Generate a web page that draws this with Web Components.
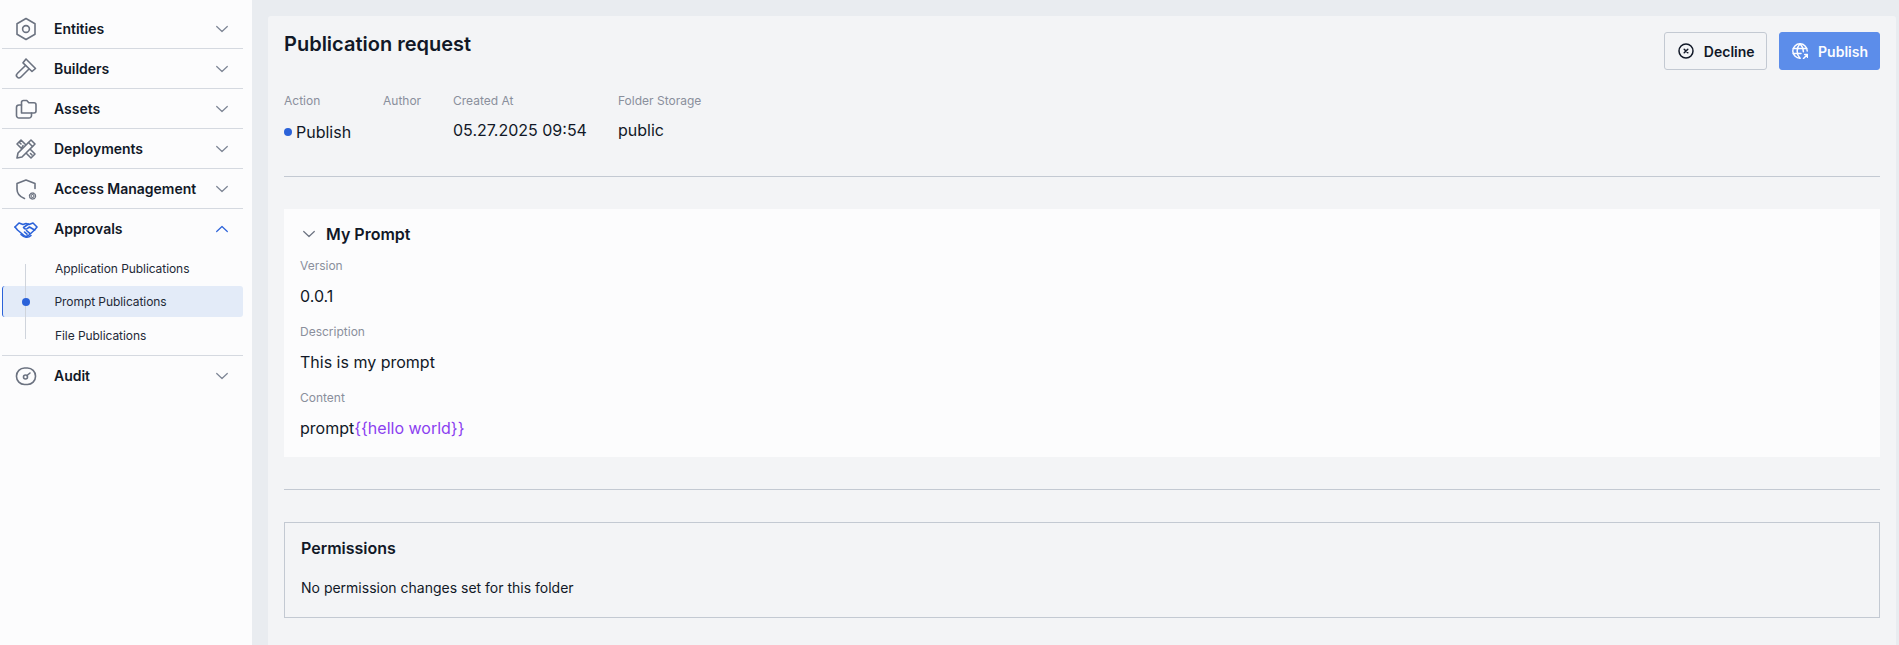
<!DOCTYPE html>
<html>
<head>
<meta charset="utf-8">
<style>
    html, body { margin: 0; height: 100%; overflow: hidden; }
    body {
        font-family: Inter, "Liberation Sans", sans-serif;
        color: #111827;
        background: #e9ecf0;
        display: flex;
    }
</style>
</head>
<body>
<side-bar>
    <nav-group label="Entities" icon="entities"></nav-group>
    <nav-group label="Builders" icon="builders"></nav-group>
    <nav-group label="Assets" icon="assets"></nav-group>
    <nav-group label="Deployments" icon="deployments"></nav-group>
    <nav-group label="Access Management" icon="access"></nav-group>
    <nav-group label="Approvals" icon="approvals" open>
        <nav-item>Application Publications</nav-item>
        <nav-item active>Prompt Publications</nav-item>
        <nav-item>File Publications</nav-item>
    </nav-group>
    <nav-group label="Audit" icon="audit" last></nav-group>
</side-bar>
<request-panel>
    <div slot="meta" style="display:contents">
        <meta-field label="Action" width="99" tight><status-dot>Publish</status-dot></meta-field>
        <meta-field label="Author" width="70" tight></meta-field>
        <meta-field label="Created At" width="165" tight>05.27.2025 09:54</meta-field>
        <meta-field label="Folder Storage" tight>public</meta-field>
    </div>
    <prompt-card title="My Prompt" slot="card">
        <meta-field label="Version" stacked>0.0.1</meta-field>
        <meta-field label="Description" stacked>This is my prompt</meta-field>
        <meta-field label="Content" stacked>prompt<span style="color:#8b3ff0">{{hello world}}</span></meta-field>
    </prompt-card>
    <permissions-box slot="permissions">No permission changes set for this folder</permissions-box>
</request-panel>

<script>
const ICONS = {
    entities: '<path d="M12 1.500l9 5.200v10.600l-9 5.200-9-5.200V6.700z"/><circle cx="12" cy="12" r="3.400"/>',
    builders: '<path d="M12 2l9.500 9.500-3.500 3L9 5.800z"/><path d="M11.500 8.500L3.300 16.500a2.300 2.300 0 0 0 3.400 3.700l8-8"/>',
    assets: '<path d="M7.500 16V5.500a2 2 0 0 1 2-2h3.300l2 2.200H20a2 2 0 0 1 2 2V14a2 2 0 0 1-2 2z"/><path d="M7.500 8H5a2.500 2.500 0 0 0-2.500 2.500V18.500A2.500 2.500 0 0 0 5 21h10a2.500 2.500 0 0 0 2.500-2.500V16"/>',
    deployments: '<path d="M3 21l1-5L17 3l4 4L8 20z"/><path d="M14.500 5.500l4 4"/><path d="M9 8.500L7.500 11.500 3 7l4-4 4.500 4.500"/><path d="M12.500 16.500L17 21l4-4-4.500-4.500"/><path d="M5.500 5.500l1.500 1.500M16.500 16.500l1.500 1.500"/>',
    access: '<path d="M21 11.500V6.500L12 3 3 6.500V12c0 4.500 3.500 8 7.500 9.500"/><circle cx="18.500" cy="19" r="3" stroke-width="1.400" stroke-dasharray="1.200 1.150"/><circle cx="18.500" cy="19" r="2" fill="currentColor" stroke="none"/><circle cx="18.500" cy="19" r=".9" fill="#fcfcfd" stroke="none"/>',
    approvals: '<path d="M1 10l4-4 4 1.500 3-1 3 1 4-1.500 4 4-2.500 3"/><path d="M14.500 7L9.500 10.500c1 2 3 2 4.500.5l1.500-1L20.500 13"/><path d="M1 10l2.500 3L10 18.500c1.500 1.300 3 1 4.500 0l6-5.500"/><path d="M7 17.500c3 3 7 4 10 1"/><path d="M12.500 13.500l3 2.700M10.500 15l2.500 2.200"/>',
    audit: '<rect x="2.500" y="4" width="19" height="16.500" rx="8"/><circle cx="11.500" cy="13" r="2"/><path d="M13 11.500L16 9"/>'
};
const CHEVRON = '<svg width="14" height="14" viewBox="0 0 14 14" fill="none" stroke="currentColor" stroke-width="1.200" stroke-linecap="round" stroke-linejoin="round"><path d="M1.700 4.500L7 9.500L12.300 4.500"/></svg>';

class SideBar extends HTMLElement {
    connectedCallback() {
        this.attachShadow({ mode: 'open' }).innerHTML = `
            <style>
                :host {
                    display: block;
                    box-sizing: border-box;
                    width: 252px;
                    flex: none;
                    height: 100%;
                    padding: 9px 9px 0 2px;
                    background: #fcfcfd;
                }
            </style>
            <slot></slot>
        `;
    }
}

class NavGroup extends HTMLElement {
    connectedCallback() {
        const open = this.hasAttribute('open');
        const icon = ICONS[this.getAttribute('icon')];
        this.attachShadow({ mode: 'open' }).innerHTML = `
            <style>
                :host {
                    display: block;
                    border-bottom: 1px solid #d5d9e0;
                    height: 39px;
                }
                :host([open]) { height: 146px; }
                :host([last]) { border-bottom: none; }
                .head {
                    display: flex;
                    align-items: center;
                    height: 39px;
                    padding: 0 14px 0 12px;
                    font-size: 14px;
                    font-weight: 600;
                    color: #111827;
                }
                .icon { width: 24px; height: 24px; flex: none; color: ${open ? '#2b62d9' : '#6b7280'}; }
                .label { margin-left: 16px; flex: 1; letter-spacing: -0.02px; }
                .chev { display: flex; color: ${open ? '#2b62d9' : '#7c8494'}; transform: ${open ? 'scaleY(-1)' : 'none'}; }
                .items { position: relative; margin-top: 5px; }
                .items::before {
                    content: '';
                    position: absolute;
                    z-index: 1;
                    left: 23px;
                    top: 11px;
                    bottom: 12px;
                    width: 1px;
                    background: #cfd4dc;
                }
            </style>
            <div class="head">
                <svg class="icon" viewBox="0 0 24 24" fill="none" stroke="currentColor" stroke-width="1.600" stroke-linecap="round" stroke-linejoin="round">${icon}</svg>
                <span class="label">${this.getAttribute('label')}</span>
                <span class="chev">${CHEVRON}</span>
            </div>
            ${open ? '<div class="items"><slot></slot></div>' : ''}
        `;
    }
}

class NavItem extends HTMLElement {
    connectedCallback() {
        this.attachShadow({ mode: 'open' }).innerHTML = `
            <style>
                :host {
                    display: flex;
                    align-items: center;
                    position: relative;
                    height: 31px;
                    margin-bottom: 2.330px;
                    padding-left: 53px;
                    font-size: 12px;
                    font-weight: 400;
                    letter-spacing: -0.07px;
                    color: #1f2937;
                    border-radius: 3px;
                    box-sizing: border-box;
                }
                :host([active]) {
                    background: #e3ebf8;
                    border-left: 1.500px solid #2b62d9;
                    padding-left: 51.500px;
                }
                .dot {
                    display: none;
                    position: absolute;
                    z-index: 2;
                    left: 18.500px;
                    top: 11.500px;
                    width: 8px;
                    height: 8px;
                    border-radius: 50%;
                    background: #2b62d9;
                }
                :host([active]) .dot { display: block; }
            </style>
            <span class="dot"></span><slot></slot>
        `;
    }
}

class RequestPanel extends HTMLElement {
    connectedCallback() {
        this.attachShadow({ mode: 'open' }).innerHTML = `
            <style>
                :host {
                    display: block;
                    box-sizing: border-box;
                    flex: 1;
                    margin: 16px 3px 0 16px;
                    padding: 16px;
                    border-radius: 3px 3px 0 0;
                    background: #f3f4f6;
                }
                header { display: flex; justify-content: space-between; align-items: flex-start; }
                h1 { margin: 0; font-size: 20px; line-height: 24px; font-weight: 600; }
                .actions { display: flex; gap: 12px; }
                .meta { display: flex; margin-top: 23px; height: 49px; }
                hr { border: 0; border-top: 1px solid #c3c9d2; margin: 0; }
                .top-rule { margin-top: 34px; }
                .card-wrap { margin-top: 32px; }
                .bottom-rule { margin-top: 32px; }
                .perm-wrap { margin-top: 32px; }
            </style>
            <header>
                <h1>Publication request</h1>
                <div class="actions">
                    <action-button icon="decline">Decline</action-button>
                    <action-button icon="publish" primary>Publish</action-button>
                </div>
            </header>
            <div class="meta"><slot name="meta"></slot></div>
            <hr class="top-rule">
            <div class="card-wrap"><slot name="card"></slot></div>
            <hr class="bottom-rule">
            <div class="perm-wrap"><slot name="permissions"></slot></div>
        `;
    }
}

class ActionButton extends HTMLElement {
    connectedCallback() {
        const icon = this.getAttribute('icon') === 'decline'
            ? '<circle cx="10" cy="10" r="7"/><path d="M8.200 8.200l3.600 3.600M11.800 8.200l-3.600 3.600"/>'
            : '<path d="M17.200 10a7.200 7.200 0 1 0-7.200 7.200"/><path d="M3.300 7.500h13.400M3.300 12.500h7.700"/><path d="M10 2.800c-3.800 4-3.800 10.400 0 14.400M10 2.800c2.400 2.500 3.400 5.200 3.400 8"/><path d="M13.500 17.500l4-4M14.700 13.500h2.800v2.800"/>';
        this.attachShadow({ mode: 'open' }).innerHTML = `
            <style>
                :host {
                    display: inline-flex;
                    align-items: center;
                    gap: 10px;
                    box-sizing: border-box;
                    height: 38px;
                    padding: 0 11px 0 12.500px;
                    font-size: 14px;
                    font-weight: 600;
                    border-radius: 3px;
                    border: 1px solid #c3c9d2;
                    color: #111827;
                }
                :host([primary]) {
                    border-color: #5c8dea;
                    background: #5c8dea;
                    color: #fbfcff;
                }
                svg { width: 16px; height: 16px; flex: none; }
            </style>
            <svg viewBox="2 2 16 16" fill="none" stroke="currentColor" stroke-width="1.500" stroke-linecap="round" stroke-linejoin="round">${icon}</svg>
            <slot></slot>
        `;
    }
}

class MetaField extends HTMLElement {
    connectedCallback() {
        const width = this.getAttribute('width');
        this.attachShadow({ mode: 'open' }).innerHTML = `
            <style>
                :host {
                    display: block;
                    ${width ? `width: ${width}px; flex: none;` : ''}
                    font-size: 16px;
                    line-height: 24px;
                    color: #111827;
                }
                :host([stacked]) { margin-bottom: 16px; }
                .label {
                    font-size: 12px;
                    line-height: 16px;
                    color: #8a8f9c;
                    margin-bottom: 10px;
                }
                :host([tight]) .label { margin-bottom: 9px; }
                .value { height: 24px; }
            </style>
            <div class="label">${this.getAttribute('label')}</div>
            <div class="value"><slot></slot></div>
        `;
    }
}

class StatusDot extends HTMLElement {
    connectedCallback() {
        this.attachShadow({ mode: 'open' }).innerHTML = `
            <style>
                :host { display: inline-flex; align-items: center; gap: 4px; }
                i { width: 8px; height: 8px; border-radius: 50%; background: #2b62d9; }
            </style>
            <i></i><slot></slot>
        `;
    }
}

class PromptCard extends HTMLElement {
    connectedCallback() {
        this.attachShadow({ mode: 'open' }).innerHTML = `
            <style>
                :host {
                    display: block;
                    box-sizing: border-box;
                    height: 248px;
                    padding: 13px 16px 0;
                    background: #fcfcfd;
                }
                .head {
                    display: flex;
                    align-items: center;
                    gap: 10px;
                    height: 24px;
                    padding-left: 2px;
                    font-size: 16px;
                    font-weight: 600;
                    color: #6b7280;
                }
                .head span { color: #111827; }
                .chev { display: flex; }
                .body { margin-top: 12px; }
            </style>
            <div class="head"><div class="chev">${CHEVRON}</div><span>${this.getAttribute('title')}</span></div>
            <div class="body"><slot></slot></div>
        `;
    }
}

class PermissionsBox extends HTMLElement {
    connectedCallback() {
        this.attachShadow({ mode: 'open' }).innerHTML = `
            <style>
                :host {
                    display: block;
                    box-sizing: border-box;
                    height: 96px;
                    padding: 13px 16px;
                    border: 1px solid #c3c9d2;
                }
                h2 { margin: 0 0 16px; font-size: 16px; line-height: 24px; font-weight: 600; }
                p { margin: 0; font-size: 14px; line-height: 24px; }
            </style>
            <h2>Permissions</h2>
            <p><slot></slot></p>
        `;
    }
}

customElements.define('side-bar', SideBar);
customElements.define('nav-group', NavGroup);
customElements.define('nav-item', NavItem);
customElements.define('request-panel', RequestPanel);
customElements.define('action-button', ActionButton);
customElements.define('meta-field', MetaField);
customElements.define('status-dot', StatusDot);
customElements.define('prompt-card', PromptCard);
customElements.define('permissions-box', PermissionsBox);
</script>
</body>
</html>
